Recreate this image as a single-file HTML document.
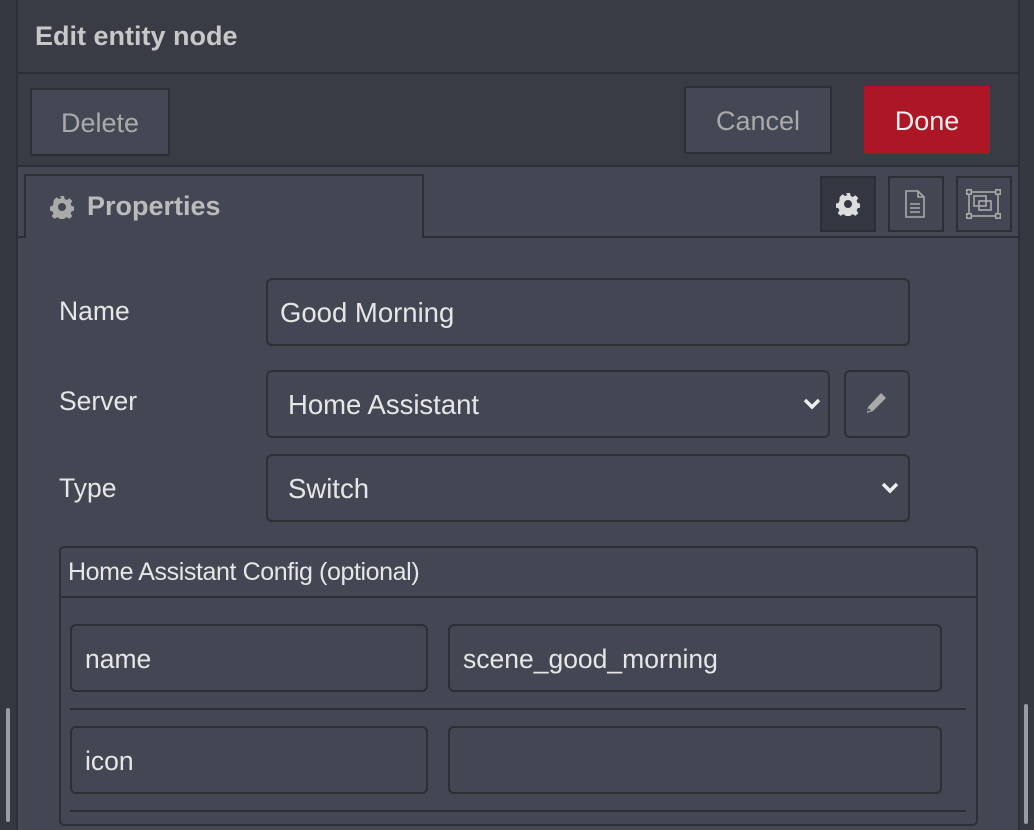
<!DOCTYPE html>
<html style="overflow:hidden;width:1034px;height:830px"><head><style>
*{box-sizing:border-box;margin:0;padding:0}
body{width:1034px;height:830px;background:#424753;font-family:"Liberation Sans",sans-serif;position:relative;overflow:hidden;color:#e6e6e6}
.a{position:absolute}
.box{position:absolute;border:2px solid #2c2f36;border-radius:6px;background:#424753}
.t{position:absolute;white-space:nowrap}
</style></head><body>
<div class="a" style="left:0;top:0;width:18px;height:830px;background:#353840;border-right:2px solid #2c2f36"></div>
<div class="a" style="left:6px;top:708px;width:4px;height:114px;background:#9a9ca3;border-radius:2px"></div>
<div class="a" style="left:1018px;top:0;width:16px;height:830px;background:#353840;border-left:2px solid #2c2f36"></div>
<div class="a" style="left:1024px;top:704px;width:4px;height:120px;background:#9a9ca3;border-radius:2px"></div>
<!-- header -->
<div class="a" style="left:18px;top:0;width:1000px;height:74px;background:#393c45;border-bottom:2px solid #2c2f36"></div>
<div class="t" style="left:35px;top:21px;font-size:27px;font-weight:bold;color:#c8c8c8">Edit entity node</div>
<div class="a" style="left:18px;top:74px;width:1000px;height:93px;background:#393c45;border-bottom:2px solid #2c2f36"></div>
<div class="a" style="left:30px;top:88px;width:140px;height:68px;background:#434854;border:2px solid #2c2f36;border-radius:2px;color:#aaa;font-size:27px;text-align:center;line-height:66px">Delete</div>
<div class="a" style="left:684px;top:86px;width:148px;height:68px;background:#434854;border:2px solid #2c2f36;border-radius:2px;color:#aaa;font-size:27px;text-align:center;line-height:66px">Cancel</div>
<div class="a" style="left:864px;top:86px;width:126px;height:68px;background:#ad1625;border-radius:2px;color:#eee;font-size:27px;text-align:center;line-height:70px">Done</div>
<!-- tab bar -->
<div class="a" style="left:18px;top:236px;width:1000px;height:2px;background:#2c2f36"></div>
<div class="a" style="left:24px;top:174px;width:400px;height:64px;background:#424753;border:2px solid #2c2f36;border-bottom:none"></div>
<svg class="a" style="left:50px;top:195px" width="24" height="24" viewBox="0 0 24 24"><path fill="#aaa" fill-rule="evenodd" d="M10 1h4l.6 3 2.3 1 2.6-1.7 2.8 2.8-1.7 2.6 1 2.3 3 .6v4l-3 .6-1 2.3 1.7 2.6-2.8 2.8-2.6-1.7-2.3 1-.6 3h-4l-.6-3-2.3-1-2.6 1.7-2.8-2.8 1.7-2.6-1-2.3-3-.6v-4l3-.6 1-2.3L3.7 5.1l2.8-2.8 2.6 1.7 2.3-1zM12 8a4 4 0 100 8 4 4 0 000-8z"/></svg>
<div class="t" style="left:87px;top:191px;font-size:27px;font-weight:bold;color:#bbb">Properties</div>
<div class="a" style="left:820px;top:176px;width:56px;height:56px;background:#343741;border:2px solid #2c2f36"></div>
<svg class="a" style="left:836px;top:192px" width="24" height="24" viewBox="0 0 24 24"><path fill="#ddd" fill-rule="evenodd" d="M10 1h4l.6 3 2.3 1 2.6-1.7 2.8 2.8-1.7 2.6 1 2.3 3 .6v4l-3 .6-1 2.3 1.7 2.6-2.8 2.8-2.6-1.7-2.3 1-.6 3h-4l-.6-3-2.3-1-2.6 1.7-2.8-2.8 1.7-2.6-1-2.3-3-.6v-4l3-.6 1-2.3L3.7 5.1l2.8-2.8 2.6 1.7 2.3-1zM12 8a4 4 0 100 8 4 4 0 000-8z"/></svg>
<div class="a" style="left:888px;top:176px;width:56px;height:56px;border:2px solid #2c2f36"></div>
<svg class="a" style="left:902px;top:190px" width="28" height="28" viewBox="0 0 28 28"><path fill="none" stroke="#aaa" stroke-width="1.6" d="M4 1h12l6 6v20H4zM16 1v6h6M8 14h10M8 18h10M8 22h10"/></svg>
<div class="a" style="left:956px;top:176px;width:56px;height:56px;border:2px solid #2c2f36"></div>
<svg class="a" style="left:966px;top:189px" width="36" height="30" viewBox="0 0 36 30"><g fill="none" stroke="#aaa" stroke-width="1.6"><rect x="3" y="3" width="29" height="24"/><rect x="8" y="7" width="12" height="10"/><rect x="13" y="12" width="12" height="9"/></g><g fill="#aaa"><rect x="0" y="0" width="6" height="6"/><rect x="29" y="0" width="6" height="6"/><rect x="0" y="24" width="6" height="6"/><rect x="29" y="24" width="6" height="6"/></g><g fill="#424753"><rect x="1.5" y="1.5" width="3" height="3"/><rect x="30.5" y="1.5" width="3" height="3"/><rect x="1.5" y="25.5" width="3" height="3"/><rect x="30.5" y="25.5" width="3" height="3"/></g></svg>
<!-- form -->
<div class="t" style="left:59px;top:296px;font-size:26.5px">Name</div>
<div class="box" style="left:266px;top:278px;width:644px;height:68px"></div>
<div class="t" style="left:280px;top:297px;font-size:27.5px">Good Morning</div>
<div class="t" style="left:59px;top:386px;font-size:26.5px">Server</div>
<div class="box" style="left:266px;top:370px;width:564px;height:68px"></div>
<div class="t" style="left:288px;top:389px;font-size:27.5px">Home Assistant</div>
<svg class="a" style="left:802px;top:396px" width="20" height="16" viewBox="0 0 20 16"><path d="M3 4l7 7 7-7" fill="none" stroke="#eee" stroke-width="3.5"/></svg>
<div class="box" style="left:844px;top:370px;width:66px;height:68px"></div>
<svg class="a" style="left:864px;top:391px" width="24" height="24" viewBox="0 0 24 24"><path fill="#aaa" d="M17 2l5 5L9 20l-6 2 1-6zM4.5 17l-1 3.5 3.5-1z"/></svg>
<div class="t" style="left:59px;top:473px;font-size:26.5px">Type</div>
<div class="box" style="left:266px;top:454px;width:644px;height:68px"></div>
<div class="t" style="left:288px;top:473px;font-size:27.5px">Switch</div>
<svg class="a" style="left:880px;top:480px" width="20" height="16" viewBox="0 0 20 16"><path d="M3 4l7 7 7-7" fill="none" stroke="#eee" stroke-width="3.5"/></svg>
<!-- config -->
<div class="box" style="left:59px;top:546px;width:919px;height:280px;border-radius:5px"></div>
<div class="a" style="left:60px;top:596px;width:917px;height:2px;background:#2c2f36"></div>
<div class="t" style="left:68px;top:558px;font-size:25px;letter-spacing:-0.4px">Home Assistant Config (optional)</div>
<div class="box" style="left:70px;top:624px;width:358px;height:68px"></div>
<div class="t" style="left:85px;top:644px;font-size:26.5px">name</div>
<div class="box" style="left:448px;top:624px;width:494px;height:68px"></div>
<div class="t" style="left:463px;top:644px;font-size:26.5px">scene_good_morning</div>
<div class="a" style="left:70px;top:708px;width:896px;height:2px;background:#2c2f36"></div>
<div class="box" style="left:70px;top:726px;width:358px;height:68px"></div>
<div class="t" style="left:85px;top:746px;font-size:26.5px">icon</div>
<div class="box" style="left:448px;top:726px;width:494px;height:68px"></div>
<div class="a" style="left:70px;top:810px;width:896px;height:2px;background:#2c2f36"></div>
</body></html>
